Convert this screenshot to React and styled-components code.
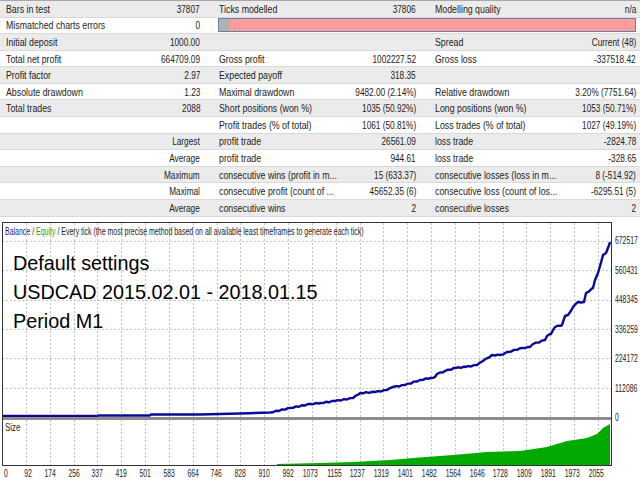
import React from "react";
import styled, { createGlobalStyle } from "styled-components";

const GlobalStyle = createGlobalStyle`
  html, body {
    margin: 0;
    padding: 0;
    background: #fff;
    overflow: hidden;
  }
`;

const Page = styled.div`
  width: 640px;
  height: 480px;
  overflow: hidden;
  color: #222;
  font-family: "Liberation Sans", sans-serif;
`;

const Report = styled.div`
  height: 217px;
  box-sizing: border-box;
  border-top: 1px solid #a8a8a8;
  margin-bottom: 5px;
`;

const Row = styled.div`
  display: flex;
  gap: 19px;
  height: 16.58px;
  box-sizing: border-box;
  padding: 0 4px 0 6px;
  align-items: center;
  background: ${(p) => (p.$odd ? "#ebebeb" : "#fff")};
  border-bottom: 1px solid #d9d9d9;
  font-size: 11px;
  white-space: nowrap;
`;

const Pair = styled.div`
  display: flex;
  width: ${(p) => p.$w}px;
`;

const Label = styled.span`
  flex: 0 0 0;
  min-width: 0;
  transform: scaleX(0.8);
  transform-origin: left center;
`;

const Value = styled.span`
  margin-left: auto;
  transform: scaleX(0.75);
  transform-origin: right center;
`;

const Progress = styled.div`
  flex: 1;
  height: 14px;
  margin-left: -1px;
  box-sizing: border-box;
  border: 1px solid #5f84ac;
  background: #ff9c9c;
`;

const ProgressDone = styled.div`
  width: 11px;
  height: 100%;
  background: #b2b2b2;
`;

const Chart = styled.div`
  position: relative;
  padding-left: 2px;
`;

const ChartBody = styled.div`
  display: flex;
`;

const Plots = styled.div`
  width: 610px;
  box-sizing: border-box;
  border: 1px solid #333;
`;

const Plot = styled.svg`
  display: block;
  width: 608px;
  height: ${(p) => p.$h}px;
`;

const Divider = styled.div`
  height: 3px;
  background: #8c8c8c;
`;

const YAxis = styled.div`
  padding-top: 4px;
  margin-left: 3px;
  width: 25px;
  font-size: 10.5px;
`;

const YLabel = styled.div`
  height: 29.5px;
  line-height: 29.5px;
  transform: scaleX(0.65);
  transform-origin: left center;
`;

const XAxis = styled.div`
  display: flex;
  height: 14px;
  font-size: 10.5px;
  line-height: 14px;
`;

const XLabel = styled.div`
  flex: 0 0 ${(p) => (p.$first ? 5 : 23.84)}px;
  display: flex;
  justify-content: flex-end;
  white-space: nowrap;
  transform: scaleX(0.65);
  transform-origin: right center;
`;

const Legend = styled.div`
  position: absolute;
  left: 5px;
  top: 3px;
  font-size: 10.5px;
  line-height: 12px;
  white-space: nowrap;
  transform: scaleX(0.665);
  transform-origin: left center;
`;

const LegendBalance = styled.span`
  color: #1a1a9a;
`;

const LegendEquity = styled.span`
  color: #1aa51a;
`;

const SizeTag = styled.div`
  position: absolute;
  left: 5px;
  top: 199px;
  font-size: 10.5px;
  transform: scaleX(0.75);
  transform-origin: left center;
`;

const Note = styled.div`
  position: absolute;
  left: 13px;
  top: 27px;
  font-size: 19.8px;
  line-height: 29px;
  color: #000;
  white-space: nowrap;
`;

const rows = [
  [["Bars in test", "37807"], ["Ticks modelled", "37806"], ["Modelling quality", "n/a"]],
  "bar",
  [["Initial deposit", "1000.00"], ["", ""], ["Spread", "Current (48)"]],
  [["Total net profit", "664709.09"], ["Gross profit", "1002227.52"], ["Gross loss", "-337518.42"]],
  [["Profit factor", "2.97"], ["Expected payoff", "318.35"], ["", ""]],
  [["Absolute drawdown", "1.23"], ["Maximal drawdown", "9482.00 (2.14%)"], ["Relative drawdown", "3.20% (7751.64)"]],
  [["Total trades", "2088"], ["Short positions (won %)", "1035 (50.92%)"], ["Long positions (won %)", "1053 (50.71%)"]],
  [["", ""], ["Profit trades (% of total)", "1061 (50.81%)"], ["Loss trades (% of total)", "1027 (49.19%)"]],
  [["", "Largest"], ["profit trade", "26561.09"], ["loss trade", "-2824.78"]],
  [["", "Average"], ["profit trade", "944.61"], ["loss trade", "-328.65"]],
  [["", "Maximum"], ["consecutive wins (profit in m...", "15 (633.37)"], ["consecutive losses (loss in m...", "8 (-514.92)"]],
  [["", "Maximal"], ["consecutive profit (count of ...", "45652.35 (6)"], ["consecutive loss (count of los...", "-6295.51 (5)"]],
  [["", "Average"], ["consecutive wins", "2"], ["consecutive losses", "2"]],
];

const widths = [194, 197, 201];

const yLabels = ["672517", "560431", "448345", "336259", "224172", "112086", "0"];
const xLabels = [0, 92, 174, 256, 337, 419, 501, 583, 664, 746, 828, 910, 992, 1073, 1155, 1237, 1319, 1401, 1482, 1564, 1646, 1728, 1809, 1891, 1973, 2055];
const gridX = xLabels.map((_, i) => Math.round(2 + i * 23.84) + 0.5);

// curve points are in page coordinates, the svg viewBox maps them back
const knots = [[3,416],[97,416],[98,415.5],[150,415.5],[151,414.5],[200,414.5],[240,413.5],[270,412.5],[290,408],[310,404],[320,403],[335,401],[353,398],[360,393],[375,392],[387,390],[393,387],[405,385],[420,380],[430,378],[435,377],[437,374],[445,371],[455,368],[465,367],[477,365],[483,361],[492,355],[500,355],[508,352],[522,348],[530,347],[533,344],[545,340],[547,336],[551,334],[555,327],[562,325],[565,316],[568,315],[573,307],[578,302],[584,302],[586,293],[593,288],[595,280],[598,273],[603,255],[606,253],[610,242]];

// the balance line goes in small stairs, not in straight runs
function stairs(points) {
  const out = [];
  points.forEach(([x, y], i) => {
    const next = points[i + 1];
    out.push(`${x},${y}`);
    if (!next || x < 270) return;
    for (let sx = x + 3; sx < next[0]; sx += 3) {
      const t = (sx - x) / (next[0] - x);
      const wobble = sx % 2 ? 0.5 : -0.4;
      out.push(`${sx},${(y + (next[1] - y) * t + wobble).toFixed(1)}`);
    }
  });
  return out.join(" ");
}

const balance = stairs(knots);
const size = "277,465 277,464 320,463 353,462 390,460 413,458 453,455 487,452 520,451 547,447 567,441 587,438 597,434 603,428 610,424 610,465";

function GridLines({ top, bottom, ys }) {
  return (
    <g stroke="#c4c4c4" strokeDasharray="2 2" strokeWidth="1">
      {gridX.map((x) => (
        <line key={x} x1={x} x2={x} y1={top} y2={bottom} />
      ))}
      {ys.map((y) => (
        <line key={y} x1="2" x2="611" y1={y} y2={y} />
      ))}
    </g>
  );
}

export default function App() {
  return (
    <Page>
      <GlobalStyle />
      <Report>
        {rows.map((row, i) =>
          row === "bar" ? (
            <Row key={i}>
              <Pair $w={widths[0]}>
                <Label>Mismatched charts errors</Label>
                <Value>0</Value>
              </Pair>
              <Progress>
                <ProgressDone />
              </Progress>
            </Row>
          ) : (
            <Row key={i} $odd={i % 2 === 0}>
              {row.map(([label, value], j) => (
                <Pair key={j} $w={widths[j]}>
                  <Label>{label}</Label>
                  <Value>{value}</Value>
                </Pair>
              ))}
            </Row>
          )
        )}
      </Report>
      <Chart>
        <ChartBody>
          <Plots>
            <Plot $h={194} viewBox="3 223 608 194">
              <GridLines top={223} bottom={417} ys={[241.5, 270.5, 300.5, 329.5, 358.5, 388.5]} />
              <polyline points={balance} fill="none" stroke="#0a0a96" strokeWidth="2.4" strokeLinejoin="round" />
            </Plot>
            <Divider />
            <Plot $h={45} viewBox="3 420 608 45">
              <GridLines top={420} bottom={465} ys={[]} />
              <polygon points={size} fill="#00aa00" />
            </Plot>
          </Plots>
          <YAxis>
            {yLabels.map((label) => (
              <YLabel key={label}>{label}</YLabel>
            ))}
          </YAxis>
        </ChartBody>
        <XAxis>
          {xLabels.map((label, i) => (
            <XLabel key={label} $first={i === 0}>
              {label}
            </XLabel>
          ))}
        </XAxis>
        <Legend>
          <LegendBalance>Balance</LegendBalance> / <LegendEquity>Equity</LegendEquity> / Every tick (the most precise method based on all available least timeframes to generate each tick)
        </Legend>
        <SizeTag>Size</SizeTag>
        <Note>
          Default settings
          <br />
          USDCAD 2015.02.01 - 2018.01.15
          <br />
          Period M1
        </Note>
      </Chart>
    </Page>
  );
}
